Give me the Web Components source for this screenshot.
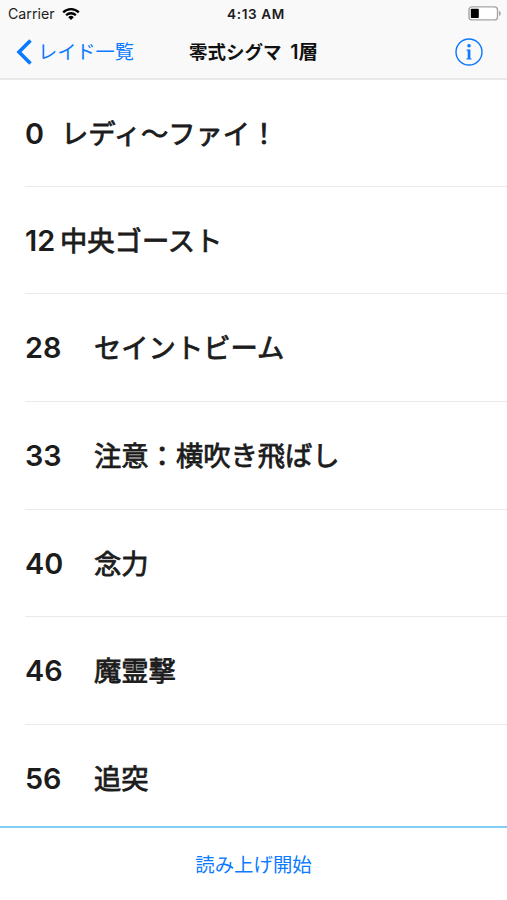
<!DOCTYPE html>
<html lang="ja">
<head>
<meta charset="utf-8">
<title>零式シグマ 1層</title>
<style>
  body {
    margin: 0;
    background: #fff;
    font-family: Inter, "Noto Sans CJK JP", sans-serif;
  }
</style>
</head>
<body>
<raid-app>
  <status-bar slot="top" carrier="Carrier" time="4:13 AM"></status-bar>
  <nav-bar slot="top" back="レイド一覧">零式シグマ <span style="margin-left:4px; font-size:19.5px">1層</span></nav-bar>
  <timeline-row time="0" style="--time-width:36px">レディ〜ファイ！</timeline-row>
  <timeline-row time="12" style="--time-width:35px">中央ゴースト</timeline-row>
  <timeline-row time="28">セイントビーム</timeline-row>
  <timeline-row time="33">注意：横吹き飛ばし</timeline-row>
  <timeline-row time="40">念力</timeline-row>
  <timeline-row time="46">魔霊撃</timeline-row>
  <timeline-row time="56">追突</timeline-row>
  <start-button slot="bottom">読み上げ開始</start-button>
</raid-app>

<script>
const define = (name, html) => {
  const template = document.createElement('template');
  template.innerHTML = html;

  customElements.define(name, class extends HTMLElement {
    constructor() {
      super();
      this.attachShadow({ mode: 'open' }).appendChild(
        template.content.cloneNode(true)
      );
    }

    connectedCallback() {
      // fill every [data-attr] node from the attribute of that name
      this.shadowRoot.querySelectorAll('[data-attr]').forEach((node) => {
        node.textContent = this.getAttribute(node.dataset.attr);
      });
    }
  });
};

define('raid-app', `
  <style>
    :host {
      display: flex;
      flex-direction: column;
      height: 900px;
      overflow: hidden;
    }
    header {
      box-sizing: border-box;
      flex: none;
      height: 80px;
      background: #f9f9f9;
      border-bottom: 2px solid #e8e8e8;
    }
    main {
      flex: 1;
      min-height: 0;
      overflow: hidden;
    }
  </style>
  <header><slot name="top"></slot></header>
  <main><slot></slot></main>
  <slot name="bottom"></slot>
`);

define('status-bar', `
  <style>
    :host {
      display: grid;
      grid-template-columns: 1fr auto 1fr;
      align-items: center;
      height: 26px;
      padding: 0 6px 0 8px;
      font-size: 14.2px;
      line-height: 26px;
      color: #1c1c1c;
    }
    .left {
      display: flex;
      align-items: center;
      gap: 7px;
    }
    .time {
      padding: 1px 0 0 3px;
      font-size: 13.6px;
      font-weight: 600;
      letter-spacing: .6px;
    }
    svg { display: block; }
    .battery { justify-self: end; }
  </style>
  <div class="left">
    <span data-attr="carrier"></span>
    <svg width="18" height="14" viewBox="0 0 18 14" fill="none" stroke="#000" stroke-width="2.3">
      <path d="M1.2 5.4a11 11 0 0 1 15.6 0"/>
      <path d="M4.1 8.3a6.9 6.9 0 0 1 9.8 0"/>
      <path d="M9 13 6.2 10.2a4 4 0 0 1 5.6 0z" fill="#000" stroke="none"/>
    </svg>
  </div>
  <span class="time" data-attr="time"></span>
  <svg class="battery" width="33" height="15" viewBox="0 0 33 15">
    <rect x="1" y=".9" width="28.5" height="13" rx="3" fill="#fff" stroke="#a5a5a5" stroke-width="1.4"/>
    <rect x="2.8" y="2.8" width="8" height="9.2" rx=".8"/>
    <path d="M31 5.1c1.4.4 1.7 1.2 1.7 2.3s-.3 1.9-1.7 2.3z" fill="#a5a5a5"/>
  </svg>
`);

define('nav-bar', `
  <style>
    :host {
      display: grid;
      grid-template-columns: 1fr auto 1fr;
      align-items: center;
      height: 52px;
      padding: 0 24px 0 16px;
      line-height: 50px;
    }
    .back {
      display: flex;
      align-items: center;
      gap: 6px;
      font-size: 19.2px;
      color: #0a7aff;
    }
    .title {
      padding-left: 8px;
      font-size: 18.5px;
      font-weight: 600;
      color: #111;
    }
    svg { display: block; }
    .info { justify-self: end; }
  </style>
  <div class="back">
    <svg width="16" height="26" viewBox="0 0 16 26" fill="none" stroke="#0a7aff" stroke-width="3.6">
      <path d="M14.5 1.5 3 13l11.5 11.5"/>
    </svg>
    <span data-attr="back"></span>
  </div>
  <div class="title"><slot></slot></div>
  <svg class="info" width="28" height="28" viewBox="0 0 28 28" fill="#0a7aff">
    <circle cx="14" cy="14" r="13" fill="none" stroke="#0a7aff" stroke-width="1.4"/>
    <circle cx="14" cy="7.8" r="1.8"/>
    <path d="M11.6 11.6h3.8v8.8h1.2v1.1h-5.2v-1.1h1.3v-7.7h-1.1z"/>
  </svg>
`);

define('timeline-row', `
  <style>
    :host {
      display: flex;
      align-items: center;
      box-sizing: border-box;
      height: 107.67px;
      margin-left: 25px;
      border-bottom: 1px solid #e9e9e9;
      color: #1c1c1c;
    }
    :host(:first-of-type) {
      height: 106.8px;
      padding-top: 1px;
    }
    .time {
      width: var(--time-width, 69px);
      font-size: 28.8px;
      font-weight: 600;
    }
    /* the CJK face has no semibold, so thicken the regular one */
    .label {
      padding-bottom: 3px;
      font-size: 27.3px;
      -webkit-text-stroke: .8px currentColor;
    }
  </style>
  <span class="time" data-attr="time"></span>
  <span class="label"><slot></slot></span>
`);

define('start-button', `
  <style>
    :host {
      display: flex;
      flex: none;
      align-items: center;
      justify-content: center;
      box-sizing: border-box;
      height: 74px;
      padding-bottom: 2px;
      border-top: 2px solid #7fcdf5;
      font-size: 19.4px;
      color: #0a7aff;
    }
  </style>
  <slot></slot>
`);
</script>
</body>
</html>
